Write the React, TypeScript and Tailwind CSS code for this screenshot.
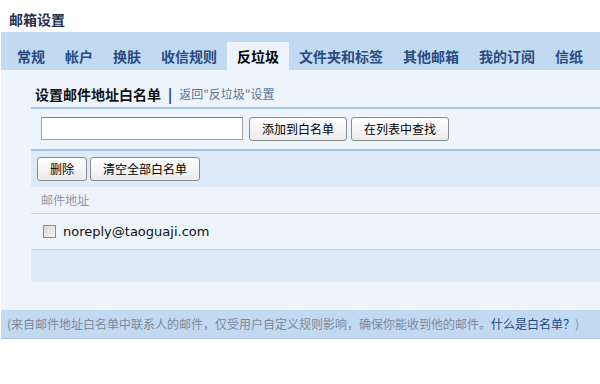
const cjk = "font-['Noto_Sans_CJK_SC',sans-serif]";

const tabs = ["常规", "帐户", "换肤", "收信规则", "反垃圾", "文件夹和标签", "其他邮箱", "我的订阅", "信纸"];

function Btn({ children }: { children: React.ReactNode }) {
  return (
    <button className="h-[24px] px-[12px] rounded-[3px] border border-[#8c8c8c] bg-gradient-to-b from-white to-[#ebebeb] text-[12px] leading-[22px] text-black">
      {children}
    </button>
  );
}

export default function App() {
  return (
    <div className={`w-[600px] h-[384px] bg-white overflow-hidden ${cjk}`}>
      {/* title */}
      <div className="h-[32px] pl-[9px] pt-[9px] text-[14px] leading-[20px] font-bold text-[#1f3050]">邮箱设置</div>

      {/* tabs */}
      <div className="ml-px h-[38px] bg-[#c2d9f2] flex items-end pl-[6px]">
        {tabs.map((t) => (
          <div
            key={t}
            className={
              t === "反垃圾"
                ? "h-[28px] px-[10px] bg-[#eef4fc] text-[14px] font-bold leading-[28px] text-black"
                : "h-[28px] px-[10px] text-[14px] font-bold leading-[28px] text-[#2b4c7e]"
            }
          >
            {t}
          </div>
        ))}
      </div>

      {/* content */}
      <div className="ml-px h-[240px] bg-[#eef4fc] pl-[30px] pt-[14px]">
        <div className="h-[25px] pl-[4px] border-b-2 border-[#a9c7e8] flex items-start">
          <span className="text-[14px] font-bold leading-[20px] text-[#111]">设置邮件地址白名单</span>
          <span className="ml-[7px] text-[14px] font-bold leading-[20px] text-[#1f3050]">|</span>
          <span className="ml-[7px] text-[12px] leading-[20px] text-[#5a7394]">返回&quot;反垃圾&quot;设置</span>
        </div>

        <div className="h-[42px] pl-[10px] pt-[8px] flex items-start gap-[4px] border-b-2 border-[#a9c7e8]">
          <div className="w-[202px] h-[23px] bg-white border border-[#a3a3a3] border-t-[#7d7d7d]" />
          <div className="ml-[2px] flex gap-[4px]">
            <Btn>添加到白名单</Btn>
            <Btn>在列表中查找</Btn>
          </div>
        </div>

        <div className="h-[36px] bg-[#dfeaf8] pl-[6px] pt-[6px] flex items-start gap-[3px]">
          <Btn>删除</Btn>
          <Btn>清空全部白名单</Btn>
        </div>

        <div className="h-[27px] pl-[10px] border-b border-[#c9d3de] text-[12px] leading-[26px] text-[#8c99ab]">邮件地址</div>

        <div className="h-[36px] pl-[12px] border-b border-[#c9d3de] flex items-center">
          <div className="w-[13px] h-[13px] border border-[#8e8e8e] bg-gradient-to-br from-[#d6d6d6] to-[#f6f6f6]" />
          <span className="ml-[7px] text-[13px] text-[#111] font-['DejaVu_Sans',sans-serif]">noreply@taoguaji.com</span>
        </div>

        <div className="h-[32px] bg-[#dfeaf8]" />
      </div>

      {/* footer */}
      <div className="ml-px h-[29px] bg-[#c2d9f2] border-b border-[#a9c2df] pl-[6px] text-[12px] leading-[28px] text-[#7d8a9c] whitespace-nowrap">
        (来自邮件地址白名单中联系人的邮件，仅受用户自定义规则影响，确保你能收到他的邮件。
        <span className="text-[#1d4a86]">什么是白名单？</span>)
      </div>
    </div>
  );
}
